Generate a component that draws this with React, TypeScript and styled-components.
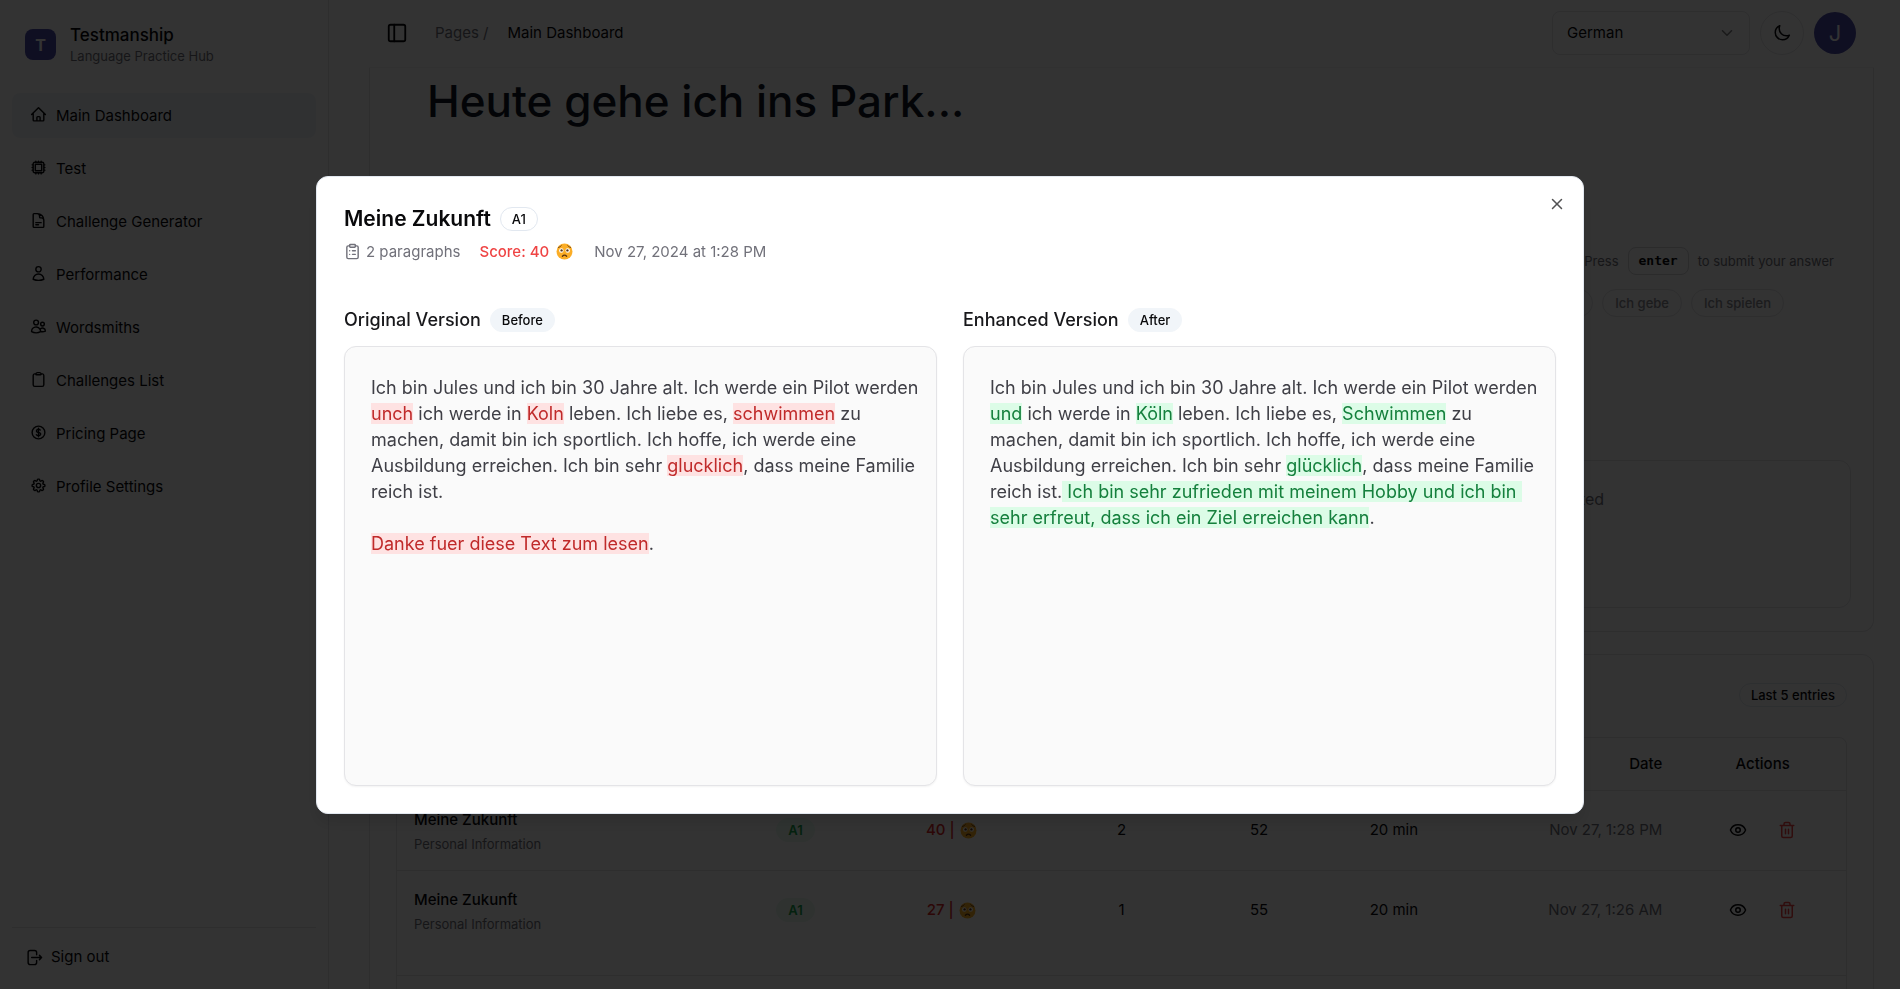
import React from "react";
import styled, { createGlobalStyle, css } from "styled-components";
import { ClipboardList, Eye, PanelLeft, X, ChevronDown } from "lucide-react";
import {
  HiOutlineHome,
  HiOutlineCpuChip,
  HiOutlineDocumentText,
  HiOutlineUser,
  HiOutlineUsers,
  HiOutlineClipboard,
  HiOutlineCurrencyDollar,
  HiOutlineCog8Tooth,
  HiOutlineMoon,
} from "react-icons/hi2";

const GlobalStyle = createGlobalStyle`
  *, *::before, *::after { box-sizing: border-box; }
  body {
    margin: 0;
    background: #fff;
    color: #09090b;
    font-family: Inter, "Liberation Sans", sans-serif;
    font-size: 16px;
    line-height: 24px;
    overflow: hidden;
  }
  h1, h2, h3, p, ul { margin: 0; padding: 0; }
  button, select, input { font: inherit; color: inherit; }
`;

const Shell = styled.div`
  display: flex;
  height: 100vh;
  overflow: hidden;
`;

/* Sidebar */

const Sidebar = styled.aside`
  display: flex;
  flex-direction: column;
  flex: none;
  width: 329px;
  padding: 24px 12px 16px;
  border-right: 1px solid #e4e4e7;
`;

const Brand = styled.div`
  display: flex;
  align-items: center;
  gap: 14px;
  height: 41px;
  padding-left: 13px;
`;

const BrandMark = styled.div`
  display: grid;
  place-items: center;
  width: 31px;
  height: 31px;
  border-radius: 8px;
  background: #4b4aa8;
  color: #fff;
  font-size: 16px;
  font-weight: 700;
`;

const BrandName = styled.p`
  font-size: 17px;
  line-height: 22px;
  font-weight: 500;
`;

const BrandNote = styled.p`
  color: #71717a;
  font-size: 13px;
  line-height: 20px;
`;

const NavList = styled.ul`
  display: flex;
  flex-direction: column;
  gap: 8px;
  margin-top: 28px;
  list-style: none;
`;

const NavLink = styled.a<{ $active?: boolean }>`
  display: flex;
  align-items: center;
  gap: 9px;
  height: 45px;
  padding: 0 18px;
  border-radius: 8px;
  color: #09090b;
  font-size: 15px;
  text-decoration: none;
  background: ${(p) => (p.$active ? "#f1f5f9" : "transparent")};
  svg { width: 17px; height: 17px; margin-bottom: 3px; stroke-width: 2; }
`;

const SignOut = styled.button`
  display: flex;
  align-items: center;
  gap: 8px;
  margin-top: auto;
  padding: 17px 14px 4px;
  border: 0;
  border-top: 1px solid #e4e4e7;
  background: none;
  font-size: 15px;
  line-height: 24px;
`;

/* Content column */

const Main = styled.main`
  flex: 1;
  min-width: 0;
  padding: 0 26px 0 40px;
`;

const TopBar = styled.header`
  display: flex;
  align-items: center;
  height: 68px;
  padding: 0 18px 2px 17px;
  border-bottom: 1px solid #f4f4f5;
`;

const IconButton = styled.button<{ $round?: boolean }>`
  display: grid;
  place-items: center;
  padding: 0;
  border: 0;
  background: none;
  ${(p) =>
    p.$round &&
    css`
      width: 44px;
      height: 44px;
      border: 1px solid #e4e4e7;
      border-radius: 50%;
    `}
`;

const Crumbs = styled.nav`
  display: flex;
  gap: 19px;
  margin-left: 27px;
  font-size: 15px;
  a { color: #71717a; text-decoration: none; }
`;

const TopActions = styled.div`
  display: flex;
  align-items: center;
  gap: 10px;
  margin-left: auto;
`;

const SelectBox = styled.label`
  position: relative;
  display: flex;
  align-items: center;
  width: 198px;
  svg { position: absolute; right: 14px; opacity: 0.5; pointer-events: none; }
`;

const Select = styled.select`
  width: 100%;
  height: 44px;
  padding: 0 14px;
  border: 1px solid #e4e4e7;
  border-radius: 8px;
  background: #fff;
  font-size: 15px;
  appearance: none;
`;

const Avatar = styled.button`
  width: 42px;
  height: 42px;
  padding: 0;
  border: 0;
  border-radius: 50%;
  background: #4b4aa8;
  color: #fff;
  font-size: 22px;
`;

const Card = styled.section<{ $top?: boolean }>`
  border: 1px solid #e4e4e7;
  border-radius: 12px;
  ${(p) =>
    p.$top
      ? css`
          height: 564px;
          padding: 0 22px 22px 26px;
          border-top: 0;
          border-radius: 0 0 12px 12px;
        `
      : css`
          margin-top: 22px;
          padding: 28px 26px;
        `}
`;

const Prompt = styled.div`
  height: 392px;
  padding: 3px 17px 0 31px;
  background: #fdfdfd;
`;

const PromptTitle = styled.h1`
  font-size: 44px;
  line-height: 60px;
  font-weight: 500;
  color: #111827;
`;

const Hint = styled.p`
  display: flex;
  align-items: center;
  justify-content: flex-end;
  gap: 9px;
  margin-top: 116px;
  color: #71717a;
  font-size: 13px;
  line-height: 20px;
`;

const Key = styled.kbd`
  height: 28px;
  padding: 3px 10px;
  border: 1px solid #d4d4d8;
  border-radius: 8px;
  color: #09090b;
  font-family: "DejaVu Sans Mono", monospace;
  font-size: 13px;
  font-weight: 700;
`;

const Chips = styled.div`
  display: flex;
  justify-content: flex-end;
  gap: 9px;
  margin-top: 14px;
  padding-right: 50px;
`;

const Chip = styled.button`
  height: 28px;
  padding: 0 12px;
  border: 1px solid #e4e4e7;
  border-radius: 14px;
  background: none;
  color: #8a8a93;
  font-size: 13px;
  font-weight: 500;
`;

const Feedback = styled.div`
  height: 148px;
  padding: 26px 246px 26px 26px;
  border: 1px solid #e4e4e7;
  border-radius: 12px;
  color: #71717a;
  font-size: 16px;
  text-align: right;
`;

const CardHead = styled.div`
  display: flex;
  justify-content: flex-end;
`;

const Badge = styled.span<{ $tone?: "soft" | "green" }>`
  display: inline-flex;
  align-items: center;
  height: 24px;
  padding: 0 11px;
  border: 1px solid #e2e8f0;
  border-radius: 12px;
  font-size: 13px;
  line-height: 20px;
  font-weight: 500;
  ${(p) => p.$tone === "soft" && css`border-color: #f1f5f9; background: #f1f5f9;`}
  ${(p) =>
    p.$tone === "green" &&
    css`
      border-color: #e9fbf1;
      background: #e9fbf1;
      color: #16a34a;
      font-weight: 600;
    `}
`;

const TableFrame = styled.div`
  height: 280px;
  margin-top: 30px;
  border: 1px solid #e4e4e7;
  border-radius: 8px;
`;

const TableScroll = styled.div`
  padding-bottom: 25px;
  border-bottom: 1px solid #e4e4e7;
`;

const Table = styled.table`
  width: 100%;
  table-layout: fixed;
  border-collapse: collapse;
  font-size: 15px;
  text-align: center;
  th { height: 52px; padding: 0; font-weight: 500; }
  td { height: 80px; padding: 0; border-top: 1px solid #e4e4e7; }
  th:first-child, td:first-child { padding-left: 17px; text-align: left; }
  td:first-child { padding-top: 3px; }
  th:nth-child(7), td:nth-child(7) { padding-right: 17px; text-align: right; }
`;

const EntryName = styled.p`
  line-height: 24px;
  font-weight: 500;
`;

const EntryTopic = styled.p`
  color: #71717a;
  font-size: 13px;
  line-height: 24px;
`;

const Score = styled.span`
  display: inline-flex;
  align-items: center;
  gap: 5px;
  color: #dc2626;
  font-weight: 500;
  vertical-align: top;
`;

const Muted = styled.span`
  color: #71717a;
`;

const RowActions = styled.div`
  display: flex;
  justify-content: center;
  gap: 31px;
`;

const TrashButton = styled(IconButton)`
  color: #ef4444;
`;

/* Dialog */

const Overlay = styled.div`
  position: fixed;
  inset: 0;
  display: grid;
  place-items: center;
  background: rgba(0, 0, 0, 0.8);
`;

const Dialog = styled.div`
  position: relative;
  width: 1268px;
  max-width: 94vw;
  padding: 27px;
  border: 1px solid #e2e8f0;
  border-radius: 12px;
  background: #fff;
  box-shadow: 0 10px 15px rgba(0, 0, 0, 0.1);
`;

const CloseButton = styled(IconButton)`
  position: absolute;
  top: 18px;
  right: 17px;
  opacity: 0.7;
`;

const DialogHead = styled.div`
  display: flex;
  align-items: center;
  gap: 9px;
  height: 30px;
`;

const DialogTitle = styled.h2`
  font-size: 21px;
  line-height: 28px;
  font-weight: 600;
`;

const Meta = styled.div`
  display: flex;
  align-items: center;
  gap: 19px;
  margin-top: 6px;
  color: #71717a;
  font-size: 15px;
  line-height: 24px;
`;

const MetaItem = styled.span<{ $bad?: boolean }>`
  display: flex;
  align-items: center;
  gap: 5px;
  ${(p) => p.$bad && css`gap: 7px; margin-right: 2px; color: #ef4444; font-weight: 500;`}
`;

const Versions = styled.div`
  display: grid;
  grid-template-columns: 1fr 1fr;
  gap: 26px;
  margin-top: 43px;
`;

const VersionHead = styled.div`
  display: flex;
  align-items: center;
  gap: 9px;
  height: 26px;
  margin-bottom: 13px;
`;

const VersionTitle = styled.h3`
  font-size: 18px;
  line-height: 26px;
  font-weight: 500;
  color: #18181b;
`;

const VersionBody = styled.div`
  height: 440px;
  padding: 28px 14px 26px 26px;
  border: 1px solid #e4e4e7;
  border-radius: 12px;
  background: #fafafa;
  box-shadow: 0 1px 2px rgba(0, 0, 0, 0.05);
  color: #3f3f46;
  font-size: 18px;
  line-height: 26px;
  white-space: pre-wrap;
`;

const Removed = styled.del`
  background: #fee2e2;
  color: #c02a2a;
  text-decoration: none;
`;

const Added = styled.ins`
  background: #dcfce7;
  color: #15803d;
  text-decoration: none;
`;

const emojiInk = "#5b3411";

function WorriedFace() {
  return (
    <svg width={17} height={17} viewBox="0 0 32 32" aria-label="worried" role="img">
      <circle cx="16" cy="16" r="15" fill="#fbad26" />
      <circle cx="10" cy="14" r="4.2" fill="#fff" />
      <circle cx="22" cy="14" r="4.2" fill="#fff" />
      <circle cx="10.5" cy="14" r="2.2" fill={emojiInk} />
      <circle cx="21.5" cy="14" r="2.2" fill={emojiInk} />
      <path d="M4.500 8.500q4-.5 5.500-3.500M27.500 8.500q-4-.5-5.500-3.500" fill="none" stroke={emojiInk} strokeWidth="1.500" strokeLinecap="round" />
      <path d="M12 25q4-4.500 8 0" fill="none" stroke={emojiInk} strokeWidth="2.400" strokeLinecap="round" />
    </svg>
  );
}

function TrashIcon() {
  return (
    <svg width={18} height={18} viewBox="0 0 24 24" fill="none" stroke="currentColor" strokeWidth="2" strokeLinecap="round" strokeLinejoin="round" aria-hidden="true">
      <path d="M3 6h18M5 6v14a2 2 0 0 0 2 2h10a2 2 0 0 0 2-2V6M8 6V4a2 2 0 0 1 2-2h4a2 2 0 0 1 2 2v2M10 11v6M14 11v6" />
    </svg>
  );
}

function SignOutIcon() {
  return (
    <svg width={17} height={17} viewBox="0 0 24 24" fill="none" stroke="currentColor" strokeWidth="2" strokeLinecap="round" strokeLinejoin="round" aria-hidden="true">
      <path d="M15 8V5a3 3 0 0 0-3-3H6a3 3 0 0 0-3 3v14a3 3 0 0 0 3 3h6a3 3 0 0 0 3-3v-3M8 12h14M19 9l3 3-3 3" />
    </svg>
  );
}

const nav = [
  { label: "Main Dashboard", Icon: HiOutlineHome },
  { label: "Test", Icon: HiOutlineCpuChip },
  { label: "Challenge Generator", Icon: HiOutlineDocumentText },
  { label: "Performance", Icon: HiOutlineUser },
  { label: "Wordsmiths", Icon: HiOutlineUsers },
  { label: "Challenges List", Icon: HiOutlineClipboard },
  { label: "Pricing Page", Icon: HiOutlineCurrencyDollar },
  { label: "Profile Settings", Icon: HiOutlineCog8Tooth },
];

const entries = [
  { score: 40, paragraphs: 2, words: 52, date: "Nov 27, 1:28 PM" },
  { score: 27, paragraphs: 1, words: 55, date: "Nov 27, 1:26 AM" },
];

const columns = [
  { label: "Challenge", width: "23%" },
  { label: "Level", width: "9%" },
  { label: "Score", width: "12.5%" },
  { label: "Paragraphs", width: "11%" },
  { label: "Words", width: "8%" },
  { label: "Time", width: "10.6%" },
  { label: "Date", width: "14.4%" },
  { label: "Actions", width: "11.5%" },
];

export default function App() {
  return (
    <>
      <GlobalStyle />
      <Shell>
        <Sidebar>
          <Brand>
            <BrandMark>T</BrandMark>
            <div>
              <BrandName>Testmanship</BrandName>
              <BrandNote>Language Practice Hub</BrandNote>
            </div>
          </Brand>
          <nav>
            <NavList>
              {nav.map(({ label, Icon }, i) => (
                <li key={label}>
                  <NavLink href="#" $active={i === 0}>
                    <Icon />
                    {label}
                  </NavLink>
                </li>
              ))}
            </NavList>
          </nav>
          <SignOut>
            <SignOutIcon />
            Sign out
          </SignOut>
        </Sidebar>

        <Main>
          <TopBar>
            <IconButton aria-label="Toggle sidebar">
              <PanelLeft size={22} />
            </IconButton>
            <Crumbs>
              <a href="#">Pages /</a>
              <span>Main Dashboard</span>
            </Crumbs>
            <TopActions>
              <SelectBox>
                <Select aria-label="Language" defaultValue="German">
                  <option>German</option>
                </Select>
                <ChevronDown size={18} />
              </SelectBox>
              <IconButton $round aria-label="Dark mode">
                <HiOutlineMoon size={18} strokeWidth={2} />
              </IconButton>
              <Avatar>J</Avatar>
            </TopActions>
          </TopBar>

          <Card $top>
            <Prompt>
              <PromptTitle>Heute gehe ich ins Park...</PromptTitle>
              <Hint>
                Press <Key>enter</Key> to submit your answer
              </Hint>
              <Chips>
                <Chip>Ich gehe</Chip>
                <Chip>Ich gebe</Chip>
                <Chip>Ich spielen</Chip>
              </Chips>
            </Prompt>
            <Feedback>No answer submitted</Feedback>
          </Card>

          <Card>
            <CardHead>
              <Badge>Last 5 entries</Badge>
            </CardHead>
            <TableFrame>
              <TableScroll>
                <Table>
                  <colgroup>
                    {columns.map((c) => (
                      <col key={c.label} width={c.width} />
                    ))}
                  </colgroup>
                  <thead>
                    <tr>
                      {columns.map((c) => (
                        <th key={c.label}>{c.label}</th>
                      ))}
                    </tr>
                  </thead>
                  <tbody>
                    {entries.map((e) => (
                      <tr key={e.date}>
                        <td>
                          <EntryName>Meine Zukunft</EntryName>
                          <EntryTopic>Personal Information</EntryTopic>
                        </td>
                        <td><Badge $tone="green">A1</Badge></td>
                        <td><Score>{e.score} | <WorriedFace /></Score></td>
                        <td>{e.paragraphs}</td>
                        <td>{e.words}</td>
                        <td>20 min</td>
                        <td><Muted>{e.date}</Muted></td>
                        <td>
                          <RowActions>
                            <IconButton aria-label="View"><Eye size={18} /></IconButton>
                            <TrashButton aria-label="Delete"><TrashIcon /></TrashButton>
                          </RowActions>
                        </td>
                      </tr>
                    ))}
                  </tbody>
                </Table>
              </TableScroll>
            </TableFrame>
          </Card>
        </Main>
      </Shell>

      <Overlay>
        <Dialog role="dialog" aria-labelledby="dialog-title">
          <CloseButton aria-label="Close"><X size={18} /></CloseButton>
          <DialogHead>
            <DialogTitle id="dialog-title">Meine Zukunft</DialogTitle>
            <Badge>A1</Badge>
          </DialogHead>
          <Meta>
            <MetaItem><ClipboardList size={17} />2 paragraphs</MetaItem>
            <MetaItem $bad>Score: 40 <WorriedFace /></MetaItem>
            <span>Nov 27, 2024 at 1:28 PM</span>
          </Meta>
          <Versions>
            <section>
              <VersionHead>
                <VersionTitle>Original Version</VersionTitle>
                <Badge $tone="soft">Before</Badge>
              </VersionHead>
              <VersionBody>
                Ich bin Jules und ich bin 30 Jahre alt. Ich werde ein Pilot werden <Removed>unch</Removed> ich werde in <Removed>Koln</Removed> leben. Ich liebe es, <Removed>schwimmen</Removed> zu machen, damit bin ich sportlich. Ich hoffe, ich werde eine Ausbildung erreichen. Ich bin sehr <Removed>glucklich</Removed>, dass meine Familie reich ist.{"\n\n"}
                <Removed>Danke fuer diese Text zum lesen</Removed>.
              </VersionBody>
            </section>
            <section>
              <VersionHead>
                <VersionTitle>Enhanced Version</VersionTitle>
                <Badge $tone="soft">After</Badge>
              </VersionHead>
              <VersionBody>
                Ich bin Jules und ich bin 30 Jahre alt. Ich werde ein Pilot werden <Added>und</Added> ich werde in <Added>Köln</Added> leben. Ich liebe es, <Added>Schwimmen</Added> zu machen, damit bin ich sportlich. Ich hoffe, ich werde eine Ausbildung erreichen. Ich bin sehr <Added>glücklich</Added>, dass meine Familie reich ist.<Added> Ich bin sehr zufrieden mit meinem Hobby und ich bin sehr erfreut, dass ich ein Ziel erreichen kann</Added>.
              </VersionBody>
            </section>
          </Versions>
        </Dialog>
      </Overlay>
    </>
  );
}
